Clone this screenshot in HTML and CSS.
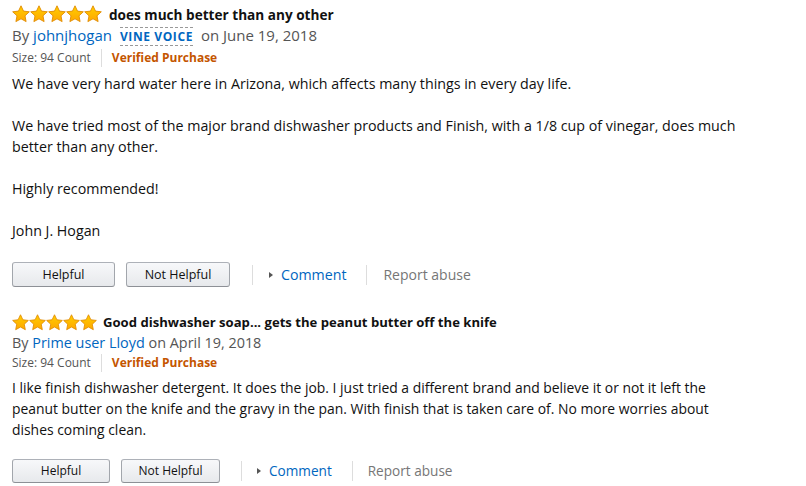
FILE: index.html
```html
<!DOCTYPE html>
<html>
<head>
<meta charset="utf-8">
<link rel="stylesheet" href="styles.css">
</head>
<body>
<div class="reviews">
  <div class="review">
    <div class="title-row">
      <span class="stars">
        <svg viewBox="0 0 90 18" width="90" height="18"><defs><linearGradient id="g1" x1="0" y1="0" x2="0" y2="1"><stop offset="0" stop-color="#ffce00"/><stop offset="1" stop-color="#ffa700"/></linearGradient><path id="st" d="M9 .8l2.5 5.3 5.8.7-4.3 4 1.1 5.8L9 13.8l-5.1 2.8L5 10.8.7 6.8l5.8-.7z" fill="url(#g1)" stroke="#e18b00" stroke-width=".9" stroke-linejoin="round"/></defs><use href="#st" x="0"/><use href="#st" x="18"/><use href="#st" x="36"/><use href="#st" x="54"/><use href="#st" x="72"/></svg>
      </span>
      <span class="title">does much better than any other</span>
    </div>
    <div class="byline">By <a class="author">johnjhogan</a> <span class="vine">VINE VOICE</span> on June 19, 2018</div>
    <div class="meta"><span class="size">Size: 94 Count</span><span class="verified">Verified Purchase</span></div>
    <div class="body">
      <p>We have very hard water here in Arizona, which affects many things in every day life.</p>
      <p>We have tried most of the major brand dishwasher products and Finish, with a 1/8 cup of vinegar, does much better than any other.</p>
      <p>Highly recommended!</p>
      <p>John J. Hogan</p>
    </div>
    <div class="actions">
      <button class="btn btn-help">Helpful</button>
      <button class="btn btn-nothelp">Not Helpful</button>
      <span class="sep"></span>
      <a class="comment"><span class="tri"></span>Comment</a>
      <span class="sep"></span>
      <span class="report">Report abuse</span>
    </div>
  </div>

  <div class="review review-sm">
    <div class="title-row">
      <span class="stars">
        <svg viewBox="0 0 90 18" width="85" height="17"><use href="#st" x="0"/><use href="#st" x="18"/><use href="#st" x="36"/><use href="#st" x="54"/><use href="#st" x="72"/></svg>
      </span>
      <span class="title">Good dishwasher soap... gets the peanut butter off the knife</span>
    </div>
    <div class="byline">By <a class="author">Prime user Lloyd</a> on April 19, 2018</div>
    <div class="meta"><span class="size">Size: 94 Count</span><span class="verified">Verified Purchase</span></div>
    <div class="body">
      <p>I like finish dishwasher detergent. It does the job. I just tried a different brand and believe it or not it left the peanut butter on the knife and the gravy in the pan. With finish that is taken care of. No more worries about dishes coming clean.</p>
    </div>
    <div class="actions">
      <button class="btn btn-help">Helpful</button>
      <button class="btn btn-nothelp">Not Helpful</button>
      <span class="sep"></span>
      <a class="comment"><span class="tri"></span>Comment</a>
      <span class="sep"></span>
      <span class="report">Report abuse</span>
    </div>
  </div>
</div>
</body>
</html>
```
FILE: styles.css
```css
* { box-sizing: border-box; }
body {
  margin: 0;
  background: #fff;
  font-family: "Open Sans", "Liberation Sans", Arial, sans-serif;
  color: #111;
}
.reviews {
  padding: 4px 12px 0 12px;
  width: 760px;
}
.review { margin-bottom: 25px; }
.title-row {
  display: flex;
  align-items: center;
  gap: 7px;
  height: 20px;
}
.stars { display: flex; }
.stars svg { display: block; }
.title {
  font-weight: 700;
  font-size: 13.6px;
}
.byline {
  margin-top: 0;
  font-size: 15px;
  color: #555;
  line-height: 22px;
}
.author { color: #0066c0; }
.vine {
  display: inline-block;
  color: #0066c0;
  font-weight: 700;
  font-size: 12px;
  letter-spacing: 0.6px;
  line-height: 17px;
  border-top: 1px dashed #999;
  border-bottom: 1px dashed #999;
  margin: 0 4px;
}
.meta {
  display: flex;
  align-items: center;
  font-size: 12px;
  line-height: 18px;
  margin-top: 3px;
}
.size { color: #555; padding-right: 10px; border-right: 1px solid #ddd; }
.verified { color: #c45500; font-weight: 700; padding-left: 10px; }
.body {
  margin-top: 6px;
  font-size: 14.25px;
  line-height: 21px;
  color: #111;
}
.body p { margin: 0 0 21px 0; }
.body p:last-child { margin-bottom: 0; }
.actions {
  display: flex;
  align-items: center;
  margin-top: 21px;
  height: 25px;
}
.btn {
  font-family: inherit;
  font-size: 12.5px;
  color: #111;
  height: 25px;
  border: 1px solid #adb1b8;
  border-color: #adb1b8 #a2a6ac #8d9096;
  border-radius: 3px;
  background: linear-gradient(to bottom, #f7f8fa, #e7e9ec);
  padding: 0;
}
.btn-help { width: 103px; }
.btn-nothelp { width: 104px; margin-left: 11px; }
.sep {
  width: 1px;
  height: 20px;
  background: #ddd;
  margin: 0 16px 0 22px;
}
.comment {
  display: flex;
  align-items: center;
  color: #0066c0;
  font-size: 14.2px;
}
.tri {
  width: 0; height: 0;
  border-left: 4px solid #555;
  border-top: 3.5px solid transparent;
  border-bottom: 3.5px solid transparent;
  margin-right: 8px;
}
.report { color: #767676; font-size: 14px; }
.comment + .sep { margin: 0 16px 0 20px; }

.review-sm .title-row { gap: 6px; }
.review-sm .title { font-size: 13.1px; }
.review-sm .byline { font-size: 14.4px; margin-top: 0; }
.review-sm .meta { margin-top: 0; }
.review-sm .body { font-size: 13.9px; margin-top: 5px; max-width: 700px; }
.review-sm .actions { margin-top: 18px; }
.review-sm .btn { font-size: 12px; height: 24px; }
.review-sm .btn-help { width: 98px; }
.review-sm .btn-nothelp { width: 99px; }
.review-sm .comment, .review-sm .report { font-size: 13.6px; }
.review-sm .sep { margin: 0 15px 0 21px; }
.review-sm .comment + .sep { margin: 0 15px 0 20px; }
```
